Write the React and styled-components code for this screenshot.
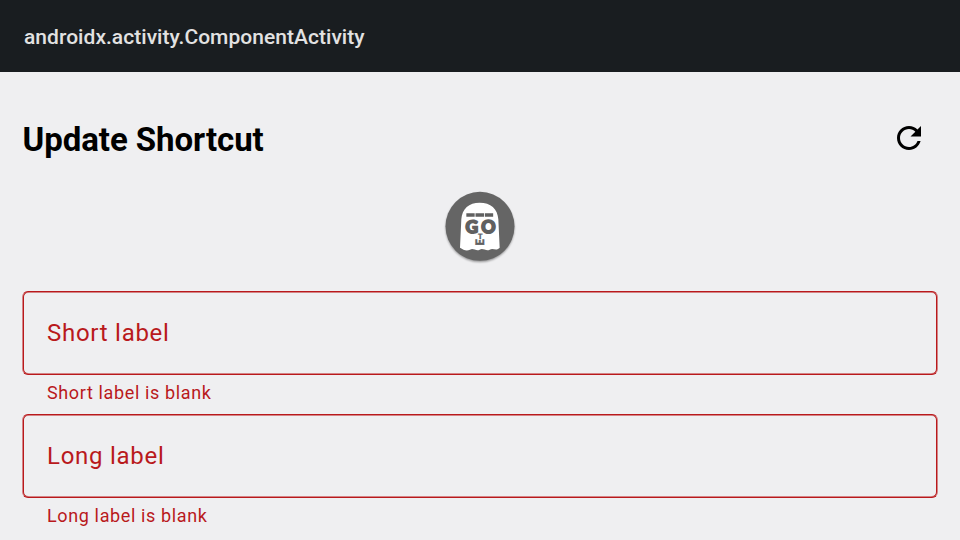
import React from "react";
import styled, { createGlobalStyle } from "styled-components";

const GlobalStyle = createGlobalStyle`
  body {
    margin: 0;
    background: #efeff1;
    overflow: hidden;
  }
`;

const Screen = styled.div`
  width: 960px;
  height: 540px;
  overflow: hidden;
  background: #efeff1;
  font-family: Roboto, sans-serif;
`;

const AppBar = styled.header`
  display: flex;
  align-items: center;
  box-sizing: border-box;
  height: 72px;
  padding: 2px 24px 0;
  background: #191d20;
  color: #e2e2e2;
  font-size: 21px;
  font-weight: 500;
  letter-spacing: 0.04px;
`;

const Content = styled.main`
  padding: 30px 22px 0;
`;

const TitleRow = styled.div`
  display: flex;
  align-items: center;
  justify-content: space-between;
  height: 72px;
  padding-right: 11px;
`;

const Title = styled.h1`
  margin: 3px 0 0 0.5px;
  color: #000;
  font-size: 33px;
  line-height: 42px;
  font-weight: 700;
  letter-spacing: -0.06px;
`;

const IconButton = styled.button`
  display: flex;
  width: 36px;
  height: 36px;
  padding: 0;
  border: 0;
  background: none;
  color: #000;
`;

const AvatarRow = styled.div`
  display: flex;
  justify-content: center;
  height: 90px;
  margin: 8px 0 19px;
`;

const Field = styled.div`
  height: 123px;
  color: #b9191c;
`;

const Outline = styled.div`
  display: flex;
  align-items: center;
  box-sizing: border-box;
  height: 84px;
  padding: 0 24px;
  border: 1px solid;
  border-color: #b9191c rgba(185, 25, 28, 0.5);
  border-radius: 6px;
  box-shadow:
    inset 1px 0 0 #b9191c,
    inset -1px 0 0 #b9191c,
    inset 0 1px 0 rgba(185, 25, 28, 0.5),
    inset 0 -1px 0 rgba(185, 25, 28, 0.5);
  font-size: 24px;
  letter-spacing: 0.73px;
`;

const Helper = styled.div`
  padding: 6px 25px 0;
  font-size: 18px;
  line-height: 24px;
  letter-spacing: 0.63px;
`;

const LogoText = styled.text`
  fill: #606060;
  stroke: #606060;
  stroke-width: ${(p) => p.$weight}px;
  font-family: Lato, sans-serif;
  font-size: ${(p) => p.$size}px;
  font-weight: 900;
  text-anchor: middle;
  text-rendering: geometricPrecision;
`;

function RefreshIcon() {
  return (
    <svg width="36" height="36" viewBox="0 0 24 24" fill="currentColor">
      <path d="M17.65 6.35C16.2 4.9 14.21 4 12 4c-4.42 0-7.99 3.58-7.99 8s3.57 8 7.99 8c3.73 0 6.84-2.55 7.73-6h-2.08c-.82 2.33-3.04 4-5.65 4-3.31 0-6-2.69-6-6s2.69-6 6-6c1.66 0 3.14.69 4.22 1.78L13 11h7V4l-2.35 2.35z" />
    </svg>
  );
}

function GhostLogo() {
  return (
    <svg width="90" height="90" viewBox="0 0 270 270">
      <defs>
        <filter id="soft" x="-10%" y="-10%" width="120%" height="120%">
          <feGaussianBlur stdDeviation="2.5" />
        </filter>
      </defs>
      <circle cx="135" cy="137" r="103" fill="#000" opacity="0.4" filter="url(#soft)" />
      <circle cx="135" cy="133" r="103.5" fill="#656565" />
      <path
        d="M75 197L79 112C81 80 102 62 134 62C167 62 188 80 190 112L194 197C185 208 174 197 164 203C154 209 144 197 134 203C124 209 115 197 105 203C94 208 86 204 75 197Z"
        fill="#fff"
      />
      <path d="M94 94h25v10.500H94zM121.500 94h25.500v10.500h-25.500zM149.500 94h25v10.500h-25z" fill="#606060" />
      <LogoText x="110" y="154" $size={52} $weight={5}>G</LogoText>
      <LogoText x="160" y="154" $size={53} $weight={5}>O</LogoText>
      <LogoText x="136" y="170.500" $size={22} $weight={1}>T</LogoText>
      <LogoText transform="translate(148 181) rotate(-90)" $size={35} $weight={1.5}>E</LogoText>
    </svg>
  );
}

function OutlinedField({ label, error }) {
  return (
    <Field>
      <Outline>{label}</Outline>
      <Helper>{error}</Helper>
    </Field>
  );
}

export default function App() {
  return (
    <Screen>
      <GlobalStyle />
      <AppBar>androidx.activity.ComponentActivity</AppBar>
      <Content>
        <TitleRow>
          <Title>Update Shortcut</Title>
          <IconButton aria-label="Refresh">
            <RefreshIcon />
          </IconButton>
        </TitleRow>
        <AvatarRow>
          <GhostLogo />
        </AvatarRow>
        <OutlinedField label="Short label" error="Short label is blank" />
        <OutlinedField label="Long label" error="Long label is blank" />
      </Content>
    </Screen>
  );
}
